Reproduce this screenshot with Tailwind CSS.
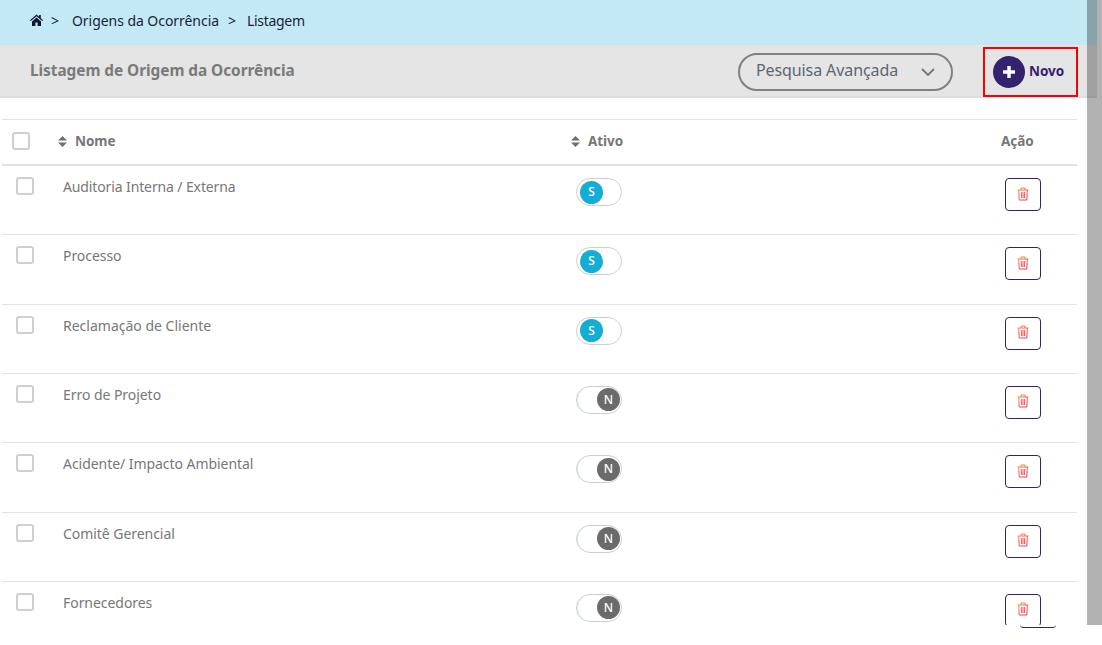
<!DOCTYPE html>
<html lang="en">
<head>
    <meta charset="UTF-8">
    <meta name="viewport" content="width=device-width, initial-scale=1.0">
    <script src="https://cdn.jsdelivr.net/npm/@tailwindcss/browser@4"></script>
    <title>Listagem de Origem da Ocorrência</title>
</head>
<body class="bg-white font-['Noto_Sans',sans-serif] text-[14px] tracking-[-0.05px] text-[#777777]">
    <svg class="absolute h-0 w-0">
        <defs>
            <linearGradient id="trashGrad" gradientUnits="userSpaceOnUse" x1="0" y1="0" x2="12" y2="14">
                <stop offset="0" stop-color="#ffa03c"/>
                <stop offset="1" stop-color="#f01a6c"/>
            </linearGradient>
        </defs>
        <symbol id="trash" viewBox="0 0 12 14">
            <path d="M0.5 3h11M4 3V1h4v2M1.7 3l.5 10h7.6l.5-10M4.4 5v6M6 5v6M7.6 5v6" fill="none" stroke="url(#trashGrad)" stroke-width="1"/>
        </symbol>
        <symbol id="sort" viewBox="0 0 9 11">
            <path d="M4.5 0L9 4.5H0zM4.5 11L0 6.5h9z" fill="#6f6f6f"/>
        </symbol>
    </svg>

    <div class="relative h-[625px] overflow-hidden">
        <!-- Breadcrumb -->
        <div class="flex h-[45px] w-[1097px] items-center bg-[#c3eaf4] pb-[5px] pl-[30px] text-[14px] text-[#1c1c3a]">
            <svg class="h-[12px] w-[13px]" viewBox="0 0 13 12"><path d="M6.5 0.6L0 6.2l.8.9L6.5 2.3l5.7 4.8.8-.9-2.2-1.9V1h-1.7v1.8zM2 7.4V12h3.4V8.6h2.2V12H11V7.4L6.5 3.6z" fill="#15123a"/></svg>
            <span class="ml-[8px]">&gt;</span>
            <span class="ml-[13px]">Origens da Ocorrência</span>
            <span class="ml-[9px]">&gt;</span>
            <span class="ml-[11px] tracking-[-0.3px]">Listagem</span>
        </div>

        <!-- Title bar -->
        <div class="flex h-[53px] w-[1097px] items-center bg-[#e5e5e5] pl-[30px] shadow-[inset_0_-3px_3px_-2px_rgba(0,0,0,0.05)]">
            <h1 class="mb-[2px] flex-1 text-[15.4px] font-bold text-[#7a7a7a]">Listagem de Origem da Ocorrência</h1>
            <div class="flex h-[38px] w-[215px] items-center justify-between rounded-full border-2 border-[#808080] px-[16px] text-[16px] tracking-[-0.1px] text-[#5c6672]">
                <span class="mb-[3px]">Pesquisa Avançada</span>
                <svg class="h-[8px] w-[14px]" viewBox="0 0 14 8"><path d="M1 1l6 6 6-6" fill="none" stroke="#737373" stroke-width="1.8"/></svg>
            </div>
            <div class="ml-[30px] mr-[19px] flex h-[50px] w-[95px] items-center border-2 border-[#ff0000] pl-[8px]">
                <span class="flex h-[32px] w-[32px] items-center justify-center rounded-full bg-[#35226e]">
                    <svg class="h-[12px] w-[12px]" viewBox="0 0 12 12"><path d="M6 0v12M0 6h12" stroke="#fff" stroke-width="3.4"/></svg>
                </span>
                <span class="mb-[1px] ml-[4px] text-[13.5px] font-bold text-[#35226e]">Novo</span>
            </div>
        </div>

        <!-- Table -->
        <div class="ml-[2px] mt-[21px] w-[1075px]">
            <div class="flex h-[47px] items-center border-y border-t-[#e3e3e3] border-b-2 border-b-[#e0e2e6] pb-[2px] text-[13.5px] font-bold">
                <div class="w-[56px] pl-[10px]">
                    <div class="h-[18px] w-[18px] rounded-[3px] border-2 border-[#cfcfcf]"></div>
                </div>
                <div class="flex w-[513px] items-center gap-[8px]">
                    <svg class="h-[11px] w-[9px]"><use href="#sort"/></svg>
                    <span>Nome</span>
                </div>
                <div class="flex w-[430px] items-center gap-[8px]">
                    <svg class="h-[11px] w-[9px]"><use href="#sort"/></svg>
                    <span>Ativo</span>
                </div>
                <span>Ação</span>
            </div>

            <div class="flex h-[69.33px] border-b border-[#e3e3e3] pt-[11px]">
                <div class="w-[61px] pl-[14px]"><div class="h-[18px] w-[18px] rounded-[3px] border-2 border-[#cfcfcf]"></div></div>
                <div class="w-[513px] leading-[19px] tracking-[-0.12px]">Auditoria Interna / Externa</div>
                <div class="w-[429px] pt-[1px]">
                    <div class="flex h-[28px] w-[46px] items-center rounded-full border border-[#cfcfcf] pl-[3px]"><span class="flex h-[23px] w-[23px] items-center justify-center rounded-full bg-[#14add6] text-[12px] font-medium text-white">S</span></div>
                </div>
                <div class="mt-[1px] flex h-[33px] w-[36px] items-center justify-center rounded-[4px] border border-[#35226e]"><svg class="mb-[2px] mr-[1px] h-[14px] w-[12px]"><use href="#trash"/></svg></div>
            </div>
            <div class="flex h-[69.33px] border-b border-[#e3e3e3] pt-[11px]">
                <div class="w-[61px] pl-[14px]"><div class="h-[18px] w-[18px] rounded-[3px] border-2 border-[#cfcfcf]"></div></div>
                <div class="w-[513px] leading-[19px]">Processo</div>
                <div class="w-[429px] pt-[1px]">
                    <div class="flex h-[28px] w-[46px] items-center rounded-full border border-[#cfcfcf] pl-[3px]"><span class="flex h-[23px] w-[23px] items-center justify-center rounded-full bg-[#14add6] text-[12px] font-medium text-white">S</span></div>
                </div>
                <div class="mt-[1px] flex h-[33px] w-[36px] items-center justify-center rounded-[4px] border border-[#35226e]"><svg class="mb-[2px] mr-[1px] h-[14px] w-[12px]"><use href="#trash"/></svg></div>
            </div>
            <div class="flex h-[69.33px] border-b border-[#e3e3e3] pt-[11px]">
                <div class="w-[61px] pl-[14px]"><div class="h-[18px] w-[18px] rounded-[3px] border-2 border-[#cfcfcf]"></div></div>
                <div class="w-[513px] leading-[19px] tracking-normal">Reclamação de Cliente</div>
                <div class="w-[429px] pt-[1px]">
                    <div class="flex h-[28px] w-[46px] items-center rounded-full border border-[#cfcfcf] pl-[3px]"><span class="flex h-[23px] w-[23px] items-center justify-center rounded-full bg-[#14add6] text-[12px] font-medium text-white">S</span></div>
                </div>
                <div class="mt-[1px] flex h-[33px] w-[36px] items-center justify-center rounded-[4px] border border-[#35226e]"><svg class="mb-[2px] mr-[1px] h-[14px] w-[12px]"><use href="#trash"/></svg></div>
            </div>
            <div class="flex h-[69.33px] border-b border-[#e3e3e3] pt-[11px]">
                <div class="w-[61px] pl-[14px]"><div class="h-[18px] w-[18px] rounded-[3px] border-2 border-[#cfcfcf]"></div></div>
                <div class="w-[513px] leading-[19px]">Erro de Projeto</div>
                <div class="w-[429px] pt-[1px]">
                    <div class="flex h-[28px] w-[46px] items-center justify-end rounded-full border border-[#cfcfcf] pr-[1px] shadow-[inset_2px_0_1px_-1px_#cdeef6]"><span class="flex h-[23px] w-[23px] items-center justify-center rounded-full bg-[#6b6b6b] text-[12px] font-medium text-white">N</span></div>
                </div>
                <div class="mt-[1px] flex h-[33px] w-[36px] items-center justify-center rounded-[4px] border border-[#35226e]"><svg class="mb-[2px] mr-[1px] h-[14px] w-[12px]"><use href="#trash"/></svg></div>
            </div>
            <div class="flex h-[69.33px] border-b border-[#e3e3e3] pt-[11px]">
                <div class="w-[61px] pl-[14px]"><div class="h-[18px] w-[18px] rounded-[3px] border-2 border-[#cfcfcf]"></div></div>
                <div class="w-[513px] leading-[19px]">Acidente/ Impacto Ambiental</div>
                <div class="w-[429px] pt-[1px]">
                    <div class="flex h-[28px] w-[46px] items-center justify-end rounded-full border border-[#cfcfcf] pr-[1px] shadow-[inset_2px_0_1px_-1px_#cdeef6]"><span class="flex h-[23px] w-[23px] items-center justify-center rounded-full bg-[#6b6b6b] text-[12px] font-medium text-white">N</span></div>
                </div>
                <div class="mt-[1px] flex h-[33px] w-[36px] items-center justify-center rounded-[4px] border border-[#35226e]"><svg class="mb-[2px] mr-[1px] h-[14px] w-[12px]"><use href="#trash"/></svg></div>
            </div>
            <div class="flex h-[69.33px] border-b border-[#e3e3e3] pt-[11px]">
                <div class="w-[61px] pl-[14px]"><div class="h-[18px] w-[18px] rounded-[3px] border-2 border-[#cfcfcf]"></div></div>
                <div class="w-[513px] leading-[19px]">Comitê Gerencial</div>
                <div class="w-[429px] pt-[1px]">
                    <div class="flex h-[28px] w-[46px] items-center justify-end rounded-full border border-[#cfcfcf] pr-[1px] shadow-[inset_2px_0_1px_-1px_#cdeef6]"><span class="flex h-[23px] w-[23px] items-center justify-center rounded-full bg-[#6b6b6b] text-[12px] font-medium text-white">N</span></div>
                </div>
                <div class="mt-[1px] flex h-[33px] w-[36px] items-center justify-center rounded-[4px] border border-[#35226e]"><svg class="mb-[2px] mr-[1px] h-[14px] w-[12px]"><use href="#trash"/></svg></div>
            </div>
            <div class="flex h-[69.33px] pt-[11px]">
                <div class="w-[61px] pl-[14px]"><div class="h-[18px] w-[18px] rounded-[3px] border-2 border-[#cfcfcf]"></div></div>
                <div class="w-[513px] leading-[19px]">Fornecedores</div>
                <div class="w-[429px] pt-[1px]">
                    <div class="flex h-[28px] w-[46px] items-center justify-end rounded-full border border-[#cfcfcf] pr-[1px] shadow-[inset_2px_0_1px_-1px_#cdeef6]"><span class="flex h-[23px] w-[23px] items-center justify-center rounded-full bg-[#6b6b6b] text-[12px] font-medium text-white">N</span></div>
                </div>
                <div class="mt-[1px] flex h-[33px] w-[36px] items-center justify-center rounded-[4px] border border-[#35226e]"><svg class="mb-[2px] mr-[1px] h-[14px] w-[12px]"><use href="#trash"/></svg></div>
            </div>
        </div>

        <!-- scrollbar thumb -->
        <div class="absolute right-0 top-0 h-full w-[15px] bg-black/30"></div>
    </div>
    <!-- stray rounded edge under the fold -->
    <div class="absolute left-[1020px] top-[621px] h-[7px] w-[36px] rounded-[4px] border-b border-[#35226e]"></div>
</body>
</html>
